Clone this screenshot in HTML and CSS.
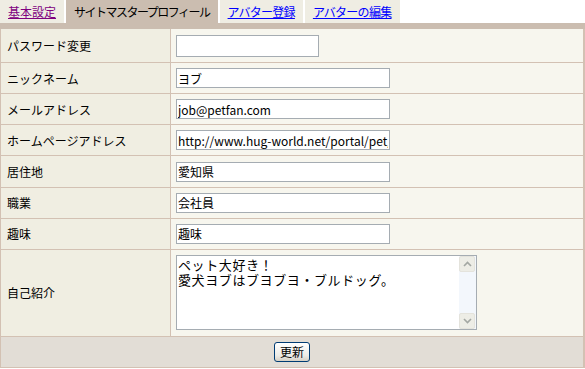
FILE: index.html
```html
<!doctype html>
<html lang="ja">

<head>
	<meta charset="utf-8">
	<title>サイトマスタープロフィール</title>
	<link rel="stylesheet" href="styles.css">
</head>

<body>
	<ul class="tabs">
		<li><a class="visited" href="#">基本設定</a></li>
		<li class="active">サイトマスタープロフィール</li>
		<li><a href="#">アバター登録</a></li>
		<li><a href="#">アバターの編集</a></li>
	</ul>
	<form class="profile">
		<table>
			<tr class="first">
				<th>パスワード変更</th>
				<td><input type="password" class="short"></td>
			</tr>
			<tr>
				<th>ニックネーム</th>
				<td><input type="text" value="ヨブ"></td>
			</tr>
			<tr>
				<th>メールアドレス</th>
				<td><input type="text" value="job@petfan.com"></td>
			</tr>
			<tr>
				<th>ホームページアドレス</th>
				<td><input type="text" value="http://www.hug-world.net/portal/pet/"></td>
			</tr>
			<tr>
				<th>居住地</th>
				<td><input type="text" value="愛知県"></td>
			</tr>
			<tr>
				<th>職業</th>
				<td><input type="text" value="会社員"></td>
			</tr>
			<tr>
				<th>趣味</th>
				<td><input type="text" value="趣味"></td>
			</tr>
			<tr class="memo-row">
				<th>自己紹介</th>
				<td>
					<div class="memo">
						<textarea>ペット大好き！
愛犬ヨブはブヨブヨ・ブルドッグ。</textarea>
						<div class="scroll">
							<span class="scroll-btn">
								<svg width="9" height="6" viewBox="0 0 9 6"><path d="M1 5 L4.5 1.5 L8 5" fill="none" stroke="#a3a7a3" stroke-width="1.6"/></svg>
							</span>
							<span class="scroll-track"></span>
							<span class="scroll-btn">
								<svg width="9" height="6" viewBox="0 0 9 6"><path d="M1 1 L4.5 4.5 L8 1" fill="none" stroke="#a3a7a3" stroke-width="1.6"/></svg>
							</span>
						</div>
					</div>
				</td>
			</tr>
			<tr class="submit">
				<td colspan="2"><button type="button">更新</button></td>
			</tr>
		</table>
	</form>
</body>

</html>
```

FILE: styles.css
```css
html
{
	margin: 0;
	padding: 0;
}
body
{
	margin: 0;
	padding: 0;
	background: #ffffff;
	color: #000000;
	font-family: "Noto Sans CJK JP", "DejaVu Sans", sans-serif;
	font-size: 12px;
}

/* tabs */
.tabs
{
	display: flex;
	gap: 2px;
	margin: 0;
	padding: 0;
	list-style: none;
	height: 23px;
	border-bottom: 6px solid #cbbdb0;
}
.tabs li
{
	display: flex;
	align-items: center;
	padding: 0 8px;
	background: #efede3;
	line-height: 23px;
	white-space: nowrap;
}
.tabs li.active
{
	background: #cbbdb0;
	letter-spacing: -1.5px;
}
.tabs a
{
	color: #0000ff;
	letter-spacing: -0.7px;
}
.tabs a.visited
{
	color: #800080;
	letter-spacing: 0;
}

/* form table */
.profile
{
	margin: 0;
}
.profile table
{
	width: 100%;
	border-collapse: collapse;
	border-left: 1px solid #d3c1b3;
	border-right: 2px solid #d3c1b3;
	border-bottom: 1px solid #d3c1b3;
}
.profile th,
.profile td
{
	height: 30.17px;
	padding: 0 5px;
	border-bottom: 1px solid #d3c1b3;
	vertical-align: middle;
}
.profile th
{
	width: 158px;
	padding-left: 6px;
	text-align: left;
	font-weight: normal;
	background: #f0eee2;
	border-right: 1px solid #d3c1b3;
}
.profile td
{
	background: #f7f6ee;
}
.profile tr.first th,
.profile tr.first td
{
	height: 33px;
}

input
{
	display: block;
	box-sizing: border-box;
	width: 214px;
	height: 20px;
	margin: 0;
	padding: 0 1px;
	border: 1px solid #a5acb2;
	background: #ffffff;
	font-family: "Noto Sans CJK JP", "DejaVu Sans", sans-serif;
	font-size: 12px;
	color: #000000;
}
input.short
{
	width: 143px;
	height: 22px;
}

/* self introduction */
.profile tr.memo-row th,
.profile tr.memo-row td
{
	height: 86px;
}
.memo
{
	display: flex;
	box-sizing: border-box;
	width: 301px;
	height: 75px;
	border: 1px solid #a5acb2;
	background: #ffffff;
}
.memo textarea
{
	flex: 1;
	margin: 0;
	padding: 1px 1px;
	border: none;
	outline: none;
	resize: none;
	overflow: hidden;
	font-family: "Noto Sans CJK JP", "DejaVu Sans", sans-serif;
	font-size: 13px;
	letter-spacing: 0.6px;
	line-height: 15px;
	color: #000000;
}
.scroll
{
	display: flex;
	flex-direction: column;
	width: 16px;
	padding: 0 1px 0 0;
	background: #f3f7fc;
}
.scroll-btn
{
	display: flex;
	align-items: center;
	justify-content: center;
	box-sizing: border-box;
	height: 16px;
	border: 1px solid #e4e3dc;
	border-radius: 2px;
	background: #edede6;
}
.scroll-track
{
	flex: 1;
}

/* footer row */
.profile tr.submit td
{
	height: 30px;
	text-align: center;
	background: #e2ddd6;
}
button
{
	height: 20px;
	padding: 0 5px;
	border: 1px solid #003c74;
	border-radius: 3px;
	background: linear-gradient(#ffffff, #ecebe6 70%, #d6d0c5);
	font-family: "Noto Sans CJK JP", "DejaVu Sans", sans-serif;
	font-size: 12px;
	line-height: 16px;
	color: #000000;
	vertical-align: middle;
}
```
